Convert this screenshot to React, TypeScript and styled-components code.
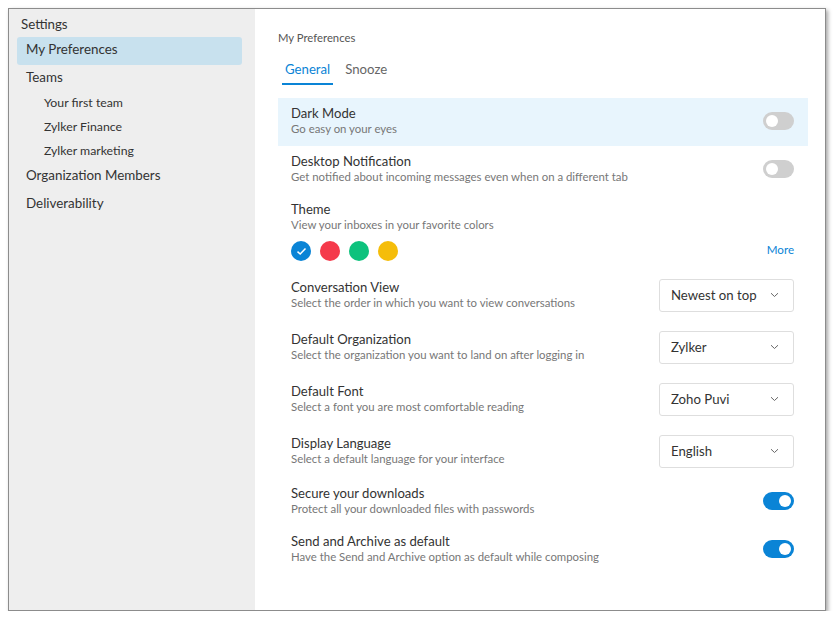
import React from 'react';
import styled, { createGlobalStyle } from 'styled-components';

const GlobalStyle = createGlobalStyle`
  html, body {
    margin: 0;
    padding: 0;
    background: #ffffff;
  }
  body {
    font-family: Lato, "Open Sans", sans-serif;
    color: #333;
  }
`;

// ---- window ----
const Page = styled.div`
  padding: 8px 0 0 8px;
`;

const Window = styled.section`
  width: 816px;
  height: 601px;
  border: 1px solid #8c8c8c;
  box-shadow: 2px 2px 4px rgba(0, 0, 0, 0.35);
  display: flex;
  background: #fff;
  overflow: hidden;
`;

// ---- sidebar ----
const Sidebar = styled.nav`
  width: 246px;
  flex-shrink: 0;
  background: #eeeeee;
  padding: 5px 13px 0 8px;
  box-sizing: border-box;
`;

const SidebarTitle = styled.div`
  font-size: 13.3px;
  line-height: 20px;
  padding-left: 4px;
  margin-bottom: 3px;
  color: #333;
`;

const NavItem = styled.div<{ $active?: boolean; $compact?: boolean }>`
  font-size: 13.4px;
  line-height: 25px;
  height: ${(p) => (p.$compact ? 26 : 28)}px;
  padding: 0 9px;
  border-radius: 3px;
  color: #333;
  background: ${(p) => (p.$active ? '#c8e1ee' : 'transparent')};
`;

const SubItem = styled.div`
  font-size: 12.3px;
  line-height: 24px;
  padding-left: 27px;
  color: #333;
`;

// ---- main ----
const Main = styled.main`
  flex: 1;
  padding: 21px 17px 0 23px;
`;

const Caption = styled.div`
  font-size: 11.3px;
  line-height: 16px;
  color: #555;
`;

const Tabs = styled.div`
  display: flex;
  gap: 9px;
  margin: 13px 0 13px 4px;
`;

const Tab = styled.div<{ $active?: boolean }>`
  font-size: 13.2px;
  line-height: 20px;
  padding: 0 3px 4px;
  color: ${(p) => (p.$active ? '#0a84d6' : '#666')};
  border-bottom: 2px solid ${(p) => (p.$active ? '#0a84d6' : 'transparent')};
`;

const Row = styled.div<{ $highlight?: boolean; $tall?: boolean }>`
  display: flex;
  align-items: center;
  justify-content: space-between;
  padding: ${(p) => (p.$tall ? '8.5px 14px 10.5px 13px' : '7px 14px 9px 13px')};
  background: ${(p) => (p.$highlight ? '#e8f5fd' : 'transparent')};
`;

const Stack = styled.div`
  flex: 1;
`;

const Title = styled.div`
  font-size: 13.1px;
  line-height: 16px;
  color: #333;
`;

const Sub = styled.div`
  font-size: 11.4px;
  line-height: 16px;
  color: #777;
`;

const Toggle = styled.div<{ $on?: boolean }>`
  width: 31px;
  height: 18px;
  border-radius: 9px;
  background: ${(p) => (p.$on ? '#0a84d6' : '#cfcfcf')};
  position: relative;
  flex-shrink: 0;
  &::after {
    content: '';
    position: absolute;
    top: 3px;
    left: ${(p) => (p.$on ? '16px' : '3px')};
    width: 12px;
    height: 12px;
    border-radius: 50%;
    background: #fff;
  }
`;

const Swatches = styled.div`
  display: flex;
  align-items: center;
  gap: 9px;
  margin-top: 8px;
`;

const Swatch = styled.div<{ $color: string }>`
  width: 20px;
  height: 20px;
  border-radius: 50%;
  background: ${(p) => p.$color};
  display: flex;
  align-items: center;
  justify-content: center;
`;

const More = styled.a`
  margin-left: auto;
  align-self: flex-start;
  font-size: 11.6px;
  line-height: 16px;
  margin-top: 1px;
  color: #0a84d6;
  text-decoration: none;
`;

const Select = styled.div`
  width: 135px;
  height: 33px;
  box-sizing: border-box;
  border: 1px solid #dedede;
  border-radius: 3px;
  display: flex;
  align-items: center;
  justify-content: space-between;
  padding: 0 14px 0 11px;
  font-size: 13.2px;
  color: #333;
  flex-shrink: 0;
`;

const Chevron = () => (
  <svg width="9" height="6" viewBox="0 0 9 6">
    <path d="M1 1.2 L4.5 4.5 L8 1.2" fill="none" stroke="#666" strokeWidth="1" />
  </svg>
);

const Check = () => (
  <svg width="11" height="9" viewBox="0 0 11 9">
    <path d="M1.5 4.6 L4.2 7 L9.5 1.5" fill="none" stroke="#fff" strokeWidth="1.5" />
  </svg>
);

type Pref = {
  title: string;
  sub: string;
  kind: 'toggle' | 'select';
  on?: boolean;
  value?: string;
  highlight?: boolean;
};

const top: Pref[] = [
  { title: 'Dark Mode', sub: 'Go easy on your eyes', kind: 'toggle', highlight: true },
  {
    title: 'Desktop Notification',
    sub: 'Get notified about incoming messages even when on a different tab',
    kind: 'toggle',
  },
];

const rest: Pref[] = [
  {
    title: 'Conversation View',
    sub: 'Select the order in which you want to view conversations',
    kind: 'select',
    value: 'Newest on top',
  },
  {
    title: 'Default Organization',
    sub: 'Select the organization you want to land on after logging in',
    kind: 'select',
    value: 'Zylker',
  },
  {
    title: 'Default Font',
    sub: 'Select a font you are most comfortable reading',
    kind: 'select',
    value: 'Zoho Puvi',
  },
  {
    title: 'Display Language',
    sub: 'Select a default language for your interface',
    kind: 'select',
    value: 'English',
  },
  {
    title: 'Secure your downloads',
    sub: 'Protect all your downloaded files with passwords',
    kind: 'toggle',
    on: true,
  },
  {
    title: 'Send and Archive as default',
    sub: 'Have the Send and Archive option as default while composing',
    kind: 'toggle',
    on: true,
  },
];

const PrefRow = ({ p }: { p: Pref }) => (
  <Row $highlight={p.highlight} $tall={p.kind === 'select'}>
    <Stack>
      <Title>{p.title}</Title>
      <Sub>{p.sub}</Sub>
    </Stack>
    {p.kind === 'toggle' ? (
      <Toggle $on={p.on} />
    ) : (
      <Select>
        {p.value}
        <Chevron />
      </Select>
    )}
  </Row>
);

const App = () => {
  return (
    <>
      <GlobalStyle />
      <Page>
        <Window>
          <Sidebar>
            <SidebarTitle>Settings</SidebarTitle>
            <NavItem $active>My Preferences</NavItem>
            <NavItem $compact>Teams</NavItem>
            <SubItem>Your first team</SubItem>
            <SubItem>Zylker Finance</SubItem>
            <SubItem>Zylker marketing</SubItem>
            <NavItem>Organization Members</NavItem>
            <NavItem>Deliverability</NavItem>
          </Sidebar>
          <Main>
            <Caption>My Preferences</Caption>
            <Tabs>
              <Tab $active>General</Tab>
              <Tab>Snooze</Tab>
            </Tabs>
            {top.map((p) => (
              <PrefRow key={p.title} p={p} />
            ))}
            <Row>
              <Stack>
                <Title>Theme</Title>
                <Sub>View your inboxes in your favorite colors</Sub>
                <Swatches>
                  <Swatch $color="#0a84d6">
                    <Check />
                  </Swatch>
                  <Swatch $color="#f53a4b" />
                  <Swatch $color="#0ec27d" />
                  <Swatch $color="#f5bd0a" />
                  <More href="#">More</More>
                </Swatches>
              </Stack>
            </Row>
            {rest.map((p) => (
              <PrefRow key={p.title} p={p} />
            ))}
          </Main>
        </Window>
      </Page>
    </>
  );
};

export default App;
